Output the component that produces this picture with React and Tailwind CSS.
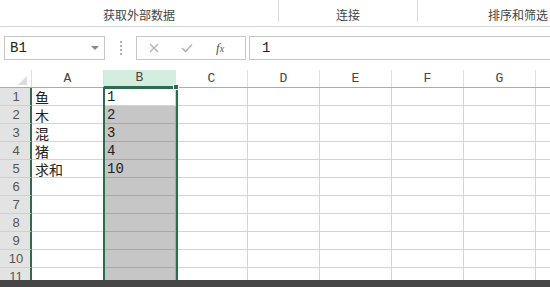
import React from "react";

const cols = ["A", "B", "C", "D", "E", "F", "G", "H"];
const data = {
  1: ["鱼", "1"],
  2: ["木", "2"],
  3: ["混", "3"],
  4: ["猪", "4"],
  5: ["求和", "10"],
};

export default function App() {
  const rows = [1, 2, 3, 4, 5, 6, 7, 8, 9, 10, 11];
  return (
    <div
      className="relative w-[550px] h-[287px] overflow-hidden bg-white text-[#222]"
      style={{ fontFamily: '"Noto Sans CJK SC", sans-serif' }}
    >
      {/* Ribbon group labels */}
      <div className="flex h-[27px] border-b border-[#d6d6d6] bg-white">
        <div className="w-[278px] shrink-0 flex items-end justify-center pb-[4px] text-[12px] leading-[14px] text-[#444]">
          获取外部数据
        </div>
        <div className="w-px h-[22px] bg-[#dcdcdc] shrink-0" />
        <div className="w-[138px] shrink-0 flex items-end justify-center pb-[4px] text-[12px] leading-[14px] text-[#444]">
          连接
        </div>
        <div className="w-px h-[22px] bg-[#dcdcdc] shrink-0" />
        <div className="w-[200px] shrink-0 flex items-end justify-center pb-[4px] text-[12px] leading-[14px] text-[#444]">
          排序和筛选
        </div>
      </div>

      {/* Formula bar */}
      <div className="flex items-start h-[43px] pt-[9px]">
        <div className="ml-[4px] w-[101px] h-[24px] border border-[#c6c6c6] flex items-center justify-between pl-[5px] pr-[5px]">
          <span className="text-[14px] text-[#222]" style={{ fontFamily: '"Liberation Mono", monospace' }}>
            B1
          </span>
          <svg width="8" height="5" viewBox="0 0 8 5">
            <path d="M0 0 L8 0 L4 4 Z" fill="#8a8a8a" />
          </svg>
        </div>
        <div className="w-[31px] h-[24px] flex flex-col items-center justify-center gap-[2px]">
          <span className="w-[2px] h-[2px] bg-[#b5b5b5]" />
          <span className="w-[2px] h-[2px] bg-[#b5b5b5]" />
          <span className="w-[2px] h-[2px] bg-[#b5b5b5]" />
          <span className="w-[2px] h-[2px] bg-[#b5b5b5]" />
        </div>
        <div className="w-[110px] h-[24px] border border-[#c6c6c6] flex items-center">
          <svg className="ml-[12px]" width="10" height="10" viewBox="0 0 10 10">
            <path d="M1 1 L9 9 M9 1 L1 9" stroke="#b0b0b0" strokeWidth="1.2" />
          </svg>
          <svg className="ml-[22px]" width="12" height="10" viewBox="0 0 12 10">
            <path d="M1 5 L4.5 8.5 L11 1.5" stroke="#b8b8b8" strokeWidth="1.6" fill="none" />
          </svg>
          <span
            className="ml-[23px] text-[13px] italic text-[#555]"
            style={{ fontFamily: '"Liberation Serif", serif' }}
          >
            f<span className="text-[10px]">x</span>
          </span>
        </div>
        <div className="ml-[3px] flex-1 h-[24px] border-y border-l border-[#c6c6c6] flex items-center pl-[12px]">
          <span className="text-[14px]" style={{ fontFamily: '"Liberation Mono", monospace' }}>
            1
          </span>
        </div>
      </div>

      {/* Grid */}
      <div className="relative">
        {/* Header row */}
        <div className="flex h-[18px] border-b border-[#ababab]">
          <div className="w-[32px] shrink-0 relative border-r border-[#dedede]">
            <svg className="absolute right-[4px] bottom-[2px]" width="9" height="9" viewBox="0 0 9 9">
              <path d="M9 0 L9 9 L0 9 Z" fill="#dcdcdc" />
            </svg>
          </div>
          {cols.map((c) => (
            <div
              key={c}
              className={
                "w-[72px] shrink-0 flex items-center justify-center text-[13px] text-[#444] border-r " +
                (c === "B"
                  ? "bg-[#d3eedf] border-[#d3eedf] border-b-2 border-b-[#2e6b4f] -mb-px"
                  : "border-[#dedede]")
              }
              style={{ fontFamily: '"Liberation Mono", monospace' }}
            >
              {c}
            </div>
          ))}
        </div>

        {rows.map((r) => (
          <div key={r} className="flex h-[18px]">
            <div className="w-[32px] shrink-0 bg-[#e3e3e3] border-r-2 border-r-[#2e6b4f] border-b border-b-[#d0d0d0] flex items-center justify-center text-[13px] leading-[17px] text-[#555] pl-[2px]"
              style={{ fontFamily: '"Liberation Sans", sans-serif' }}
            >
              {r}
            </div>
            {cols.map((c, i) => {
              const isB = c === "B";
              const grayB = isB && r > 1;
              const txt = data[r] ? (i === 0 ? data[r][0] : i === 1 ? data[r][1] : "") : "";
              return (
                <div
                  key={c}
                  className={
                    "w-[72px] shrink-0 border-r border-b flex items-end pb-[1px] overflow-hidden pl-[3px] text-[14px] " +
                    (grayB
                      ? "bg-[#c6c6c6] border-[#a8a8a8]"
                      : "bg-white border-[#d4d4d4]")
                  }
                  style={
                    i === 0
                      ? { fontFamily: '"Noto Sans CJK SC", sans-serif' }
                      : { fontFamily: '"Liberation Mono", monospace' }
                  }
                >
                  {txt ? <span className="block leading-[14px]">{txt}</span> : null}
                </div>
              );
            })}
          </div>
        ))}

        {/* Selection border around column B */}
        <div className="absolute left-[103px] top-[17px] w-[75px] h-[230px] border-2 border-[#2e6b4f] pointer-events-none" />
        <div className="absolute left-[173px] top-[14px] w-[6px] h-[6px] bg-[#2e6b4f] border border-white" />
      </div>

      {/* Bottom dark bar */}
      <div className="absolute left-0 right-0 bottom-0 h-[7px] bg-[#464646]" />
    </div>
  );
}
